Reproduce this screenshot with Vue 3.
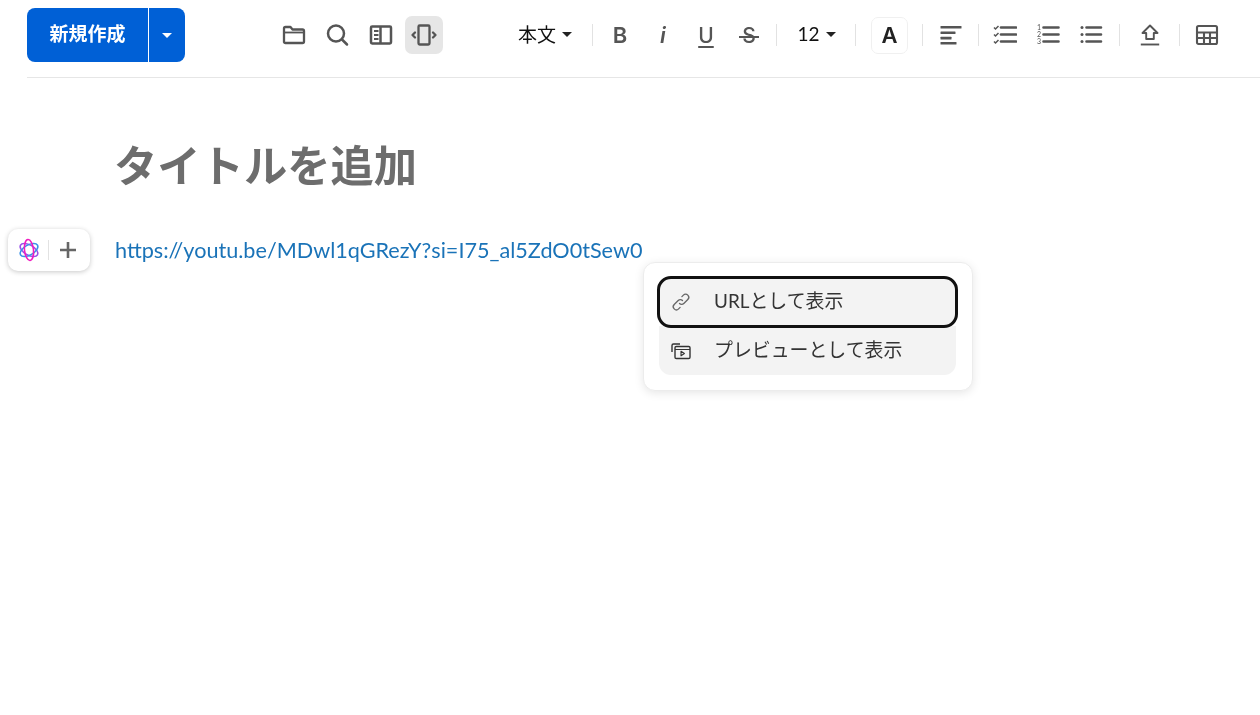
<script setup>
</script>

<template>
  <div class="page">
    <header class="header">
      <div class="create">
        <button class="create-main">新規作成</button>
        <button class="create-drop"><span class="caret white"></span></button>
      </div>
      <div class="view-tools">
        <button class="tool">
          <svg width="24" height="24" viewBox="0 0 24 24" fill="none" stroke="#555" stroke-width="2.300" stroke-linejoin="round"><path d="M2 7.500V5.500a1.500 1.500 0 0 1 1.500-1.500h5l2 2.500h10a1.500 1.500 0 0 1 1.500 1.500v10.500a1.500 1.500 0 0 1-1.500 1.500h-17A1.500 1.500 0 0 1 2 19z"/><path d="M2 9.500h20" stroke-width="1.800"/></svg>
        </button>
        <button class="tool">
          <svg width="24" height="24" viewBox="0 0 24 24" fill="none" stroke="#555" stroke-width="2.500" stroke-linecap="round"><circle cx="11" cy="10.500" r="8"/><path d="M17 16.500l5 5"/></svg>
        </button>
        <button class="tool">
          <svg width="24" height="24" viewBox="0 0 24 24" fill="none" stroke="#555" stroke-width="2.500"><rect x="2" y="3.500" width="20" height="17" rx="1.200"/><path d="M11.500 3.500v17"/><path d="M5 8h4.500M5 12h4.500M5 16h4.500" stroke-width="2"/></svg>
        </button>
        <button class="tool active">
          <svg width="28" height="24" viewBox="0 0 28 24" fill="none" stroke="#555" stroke-width="2.300" stroke-linecap="round" stroke-linejoin="round"><rect x="8.500" y="2.500" width="11" height="19" rx="1.200"/><path d="M5 9.500l-2.500 2.500 2.500 2.500M23 9.500l2.500 2.500-2.500 2.500" /></svg>
        </button>
      </div>
      <div class="format-tools">
        <button class="text-select style-select"><span>本文</span><i class="caret"></i></button>
        <span class="sep first-sep"></span>
        <div class="group">
          <button class="tool glyph bold">B</button>
          <button class="tool glyph italic">i</button>
          <button class="tool glyph under">U</button>
          <button class="tool glyph strike"><span class="strike-letter">S</span></button>
        </div>
        <span class="sep"></span>
        <button class="text-select size-select"><span>12</span><i class="caret"></i></button>
        <span class="sep"></span>
        <button class="color-box">A</button>
        <span class="sep color-sep"></span>
        <button class="tool">
          <svg width="24" height="24" viewBox="0 0 24 24" fill="#555"><rect x="1.500" y="3" width="21" height="2.600" rx=".5"/><rect x="1.500" y="8.500" width="15" height="2.600" rx=".5"/><rect x="1.500" y="13.800" width="11" height="2.600" rx=".5"/><rect x="1.500" y="19" width="16" height="2.600" rx=".5"/></svg>
        </button>
        <span class="sep list-sep"></span>
        <div class="group">
          <button class="tool">
            <svg width="24" height="24" viewBox="0 0 24 24" fill="none" stroke="#555">
              <g v-for="y in [4.500, 11.500, 18.500]" :key="y">
                <path :d="`M1 ${y}l1.500 1.500 3-3`" stroke-width="1.500"/>
                <path :d="`M8 ${y}h15`" stroke-width="2.600" stroke-linecap="round"/>
              </g>
            </svg>
          </button>
          <button class="tool">
            <svg width="24" height="24" viewBox="0 0 24 24" fill="none" stroke="#555">
              <text x="1" y="7" class="num">1</text><text x="1" y="14" class="num">2</text><text x="1" y="21" class="num">3</text>
              <path d="M7.500 4.500h15M7.500 11.500h15M7.500 18.500h15" stroke-width="2.600" stroke-linecap="round"/>
            </svg>
          </button>
          <button class="tool">
            <svg width="24" height="24" viewBox="0 0 24 24" fill="none" stroke="#555">
              <circle cx="3" cy="4.500" r="1.500" fill="#555" stroke="none"/><circle cx="3" cy="11.500" r="1.500" fill="#555" stroke="none"/><circle cx="3" cy="18.500" r="1.500" fill="#555" stroke="none"/>
              <path d="M7.500 4.500h14.500M7.500 11.500h14.500M7.500 18.500h14.500" stroke-width="2.600" stroke-linecap="round"/>
            </svg>
          </button>
        </div>
        <span class="sep upload-sep"></span>
        <button class="tool">
          <svg width="24" height="24" viewBox="0 0 24 24" fill="none" stroke="#555" stroke-width="1.900" stroke-linejoin="round"><path d="M12 2.500l-7.500 7.500h3.700v6h7.600v-6h3.700z"/><path d="M2.800 21.500h18.400"/></svg>
        </button>
        <span class="sep table-sep"></span>
        <button class="tool">
          <svg width="24" height="24" viewBox="0 0 24 24" fill="none" stroke="#555" stroke-width="2.100"><rect x="2" y="3" width="20" height="18" rx="1.500"/><path d="M2 9.500h20M2 15h20M9 9.500V21M15 9.500V21"/></svg>
        </button>
      </div>
    </header>

    <main class="doc">
      <h1 class="title">タイトルを追加</h1>
      <a class="link">https://youtu.be/MDwl1qGRezY?si=I75_al5ZdO0tSew0</a>
    </main>

    <div class="float-menu">
      <svg width="22" height="24" viewBox="0 0 22 24" fill="none" stroke-width="1.600">
        <ellipse cx="11" cy="12" rx="9.800" ry="5" stroke="#9a4fe8" transform="rotate(30 11 12)"/>
        <ellipse cx="11" cy="12" rx="9.800" ry="5" stroke="#3a92e8" transform="rotate(-30 11 12)"/>
        <ellipse cx="11" cy="12" rx="4.500" ry="10.500" stroke="#f01cc0" transform="rotate(-6 11 12)"/>
      </svg>
      <span class="float-sep"></span>
      <svg width="18" height="18" viewBox="0 0 18 18" stroke="#666" stroke-width="2.600"><path d="M9 1v16M1 9h16"/></svg>
    </div>

    <div class="popup">
      <button class="option focused">
        <svg width="22" height="22" viewBox="0 0 22 22" fill="none" stroke="#666" stroke-width="1.300" stroke-linecap="round"><path d="M9.500 12.500a3 3 0 0 0 4.300 0l4-4a3.100 3.100 0 0 0-4.400-4.400l-1.500 1.500"/><path d="M12.500 9.500a3 3 0 0 0-4.300 0l-4 4a3.100 3.100 0 0 0 4.400 4.400l1.500-1.500"/></svg>
        <span>URLとして表示</span>
      </button>
      <button class="option second">
        <svg width="22" height="22" viewBox="0 0 22 22" fill="none" stroke="#333" stroke-width="1.400" stroke-linejoin="round"><path d="M2 12V5.500a1.500 1.500 0 0 1 1.500-1.500H10"/><rect x="5" y="6.500" width="15" height="12" rx="1.300"/><path d="M5 9.500h15" stroke-width="1"/><path d="M11 11.200l3.400 2.300-3.400 2.300z" stroke-width="1.100"/></svg>
        <span>プレビューとして表示</span>
      </button>
    </div>
  </div>
</template>

<style>
html, body { background: #fff; }
</style>

<style scoped>
.page {
  position: relative;
  width: 1260px;
  height: 715px;
  overflow: hidden;
  background: #fff;
  font-family: "Lato", "Noto Sans CJK JP", sans-serif;
}
button {
  border: 0;
  background: none;
  padding: 0;
  font-family: inherit;
  display: flex;
  align-items: center;
  justify-content: center;
}
.header {
  display: flex;
  align-items: flex-start;
  height: 69px;
  padding-top: 8px;
  margin-left: 27px;
  border-bottom: 1px solid #e6e6e6;
  will-change: transform;
}
.create {
  display: flex;
  width: 158px;
  height: 54px;
  border-radius: 8px;
  overflow: hidden;
}
.create-main {
  width: 121px;
  background: #0060d6;
  color: #fff;
  font-size: 19px;
  font-weight: 700;
  font-family: "Noto Sans CJK JP", sans-serif;
  padding-bottom: 6px;
}
.create-drop {
  flex: 1;
  margin-left: 1px;
  background: #0060d6;
}
.caret {
  display: inline-block;
  width: 0;
  height: 0;
  border-left: 5.500px solid transparent;
  border-right: 5.500px solid transparent;
  border-top: 5.500px solid #222;
}
.caret.white { border-top-color: #fff; }
.view-tools {
  display: flex;
  gap: 5.330px;
  margin-left: 90px;
  margin-top: 8px;
}
.tool {
  width: 38px;
  height: 38px;
  border-radius: 7px;
  color: #555;
}
.tool.active { background: #e6e6e6; }
.format-tools {
  display: flex;
  align-items: center;
  margin-left: 74px;
  margin-top: 8px;
}
.group {
  display: flex;
  gap: 5px;
}
.sep {
  width: 1px;
  height: 22px;
  margin: 0 9px 0 8px;
  background: #e2e2e2;
}
.first-sep { margin: 0 8px 0 19px; }
.list-sep { margin-right: 7px; }
.upload-sep { margin: 0 11px 0 9px; }
.table-sep { margin: 0 8px 0 10px; }
.text-select {
  color: #111;
  font-size: 19px;
  gap: 6px;
  padding-bottom: 4px;
  font-family: "Lato", "Noto Sans CJK JP", sans-serif;
}
.text-select .caret { margin-top: 2px; }
.style-select { width: 56px; }
.size-select { width: 39px; margin: 0 11px 0 11px; }
.size-select .caret { border-left-width: 5px; border-right-width: 5px; border-top-width: 5px; }
.glyph {
  color: #555;
  font-size: 22px;
  font-family: "Inter", "Liberation Sans", sans-serif;
}
.bold { font-weight: 600; }
.italic { font-style: italic; font-weight: 600; }
.under {
  font-size: 21px;
  font-weight: 500;
  text-decoration: underline;
  text-underline-offset: 3px;
  text-decoration-thickness: 2px;
}
.strike { font-size: 21px; font-weight: 500; }
.strike-letter {
  position: relative;
  display: inline-block;
}
.strike-letter::after {
  content: "";
  position: absolute;
  left: -3px;
  right: -3px;
  top: 13px;
  height: 2px;
  background: #555;
}
.color-box {
  width: 37px;
  height: 37px;
  margin-left: 6px;
  border: 1px solid #f0f0f0;
  border-radius: 7px;
  box-sizing: border-box;
  color: #222;
  font-size: 22px;
  font-weight: 600;
  font-family: "Inter", sans-serif;
}
.color-sep { margin-left: 14px; }
.num {
  font: 7px "Lato", sans-serif;
  fill: #555;
  stroke: none;
}
.doc {
  padding: 0 0 0 114px;
  will-change: transform;
}
.title {
  margin: 55px 0 0;
  font-family: "Noto Sans CJK JP", sans-serif;
  font-size: 43.300px;
  line-height: 60px;
  font-weight: 700;
  color: #6d6d6d;
}
.link {
  display: block;
  margin: 42px 0 0 1px;
  color: #1a73b8;
  font-size: 21.630px;
  line-height: 30px;
}
.float-menu {
  position: absolute;
  left: 8px;
  top: 229px;
  width: 82px;
  height: 42px;
  display: flex;
  align-items: center;
  background: #fff;
  border-radius: 10px;
  box-shadow: 0 1px 5px rgba(0, 0, 0, .22);
  padding-left: 10px;
  box-sizing: border-box;
}
.float-sep {
  width: 1px;
  height: 20px;
  margin: 0 10px 0 8px;
  background: #e2e2e2;
}
.popup {
  position: absolute;
  left: 643px;
  top: 262px;
  width: 330px;
  height: 129px;
  box-sizing: border-box;
  padding: 15px;
  background: #fff;
  border: 1px solid #ececec;
  border-radius: 12px;
  box-shadow: 0 2px 10px rgba(0, 0, 0, .1);
  will-change: transform;
}
.option {
  width: 297px;
  height: 48px;
  justify-content: flex-start;
  gap: 22px;
  padding-left: 11px;
  background: #f3f3f3;
  border-radius: 0 0 12px 12px;
  color: #333;
  font-size: 18.900px;
  box-sizing: border-box;
}
.second { height: 49px; }
.option.focused {
  border-radius: 12px;
  outline: 3px solid #111;
  outline-offset: -1px;
  position: relative;
}
.option span { margin-bottom: 5px; }
</style>
